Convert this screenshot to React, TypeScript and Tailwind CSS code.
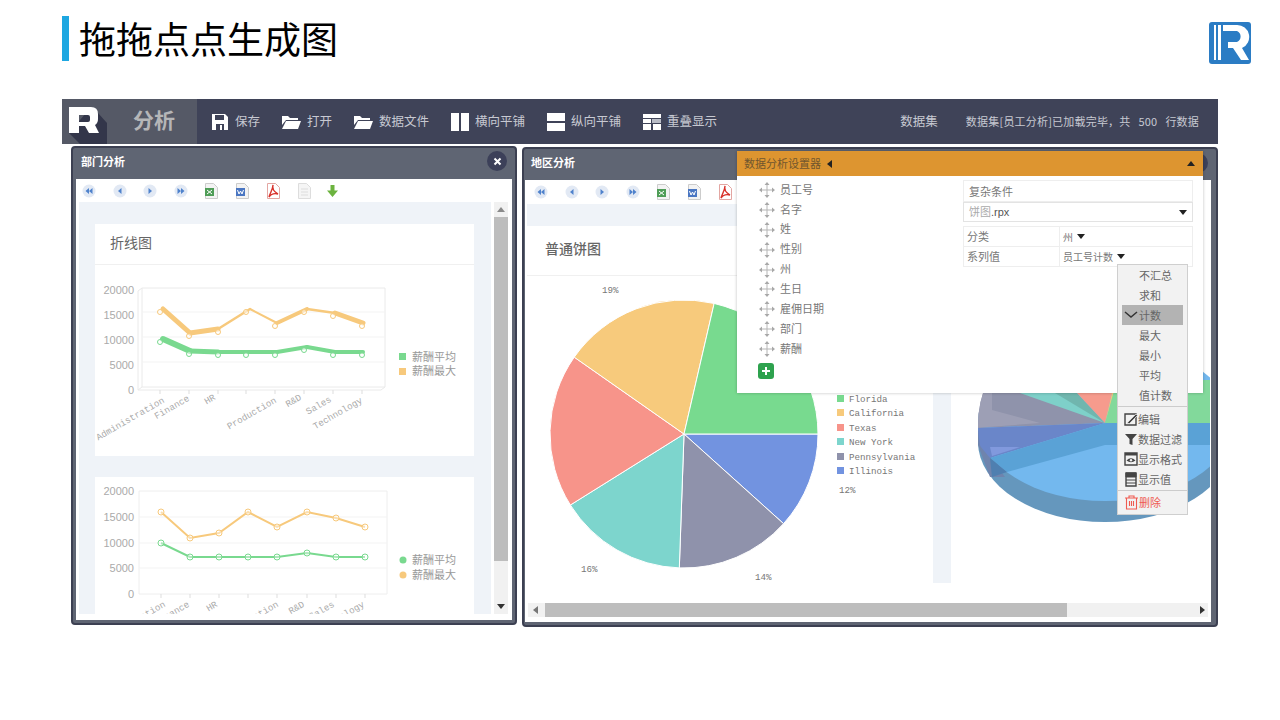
import React from 'react';

const cjk = "font-['Noto_Sans_CJK_SC','Liberation_Sans',sans-serif]";
const mono = "font-['Liberation_Mono','Noto_Sans_CJK_SC',monospace]";

const polar = (cx: number, cy: number, r: number, deg: number) => {
  const a = (deg * Math.PI) / 180;
  return [cx + r * Math.cos(a), cy + r * Math.sin(a)];
};

const slice = (cx: number, cy: number, r: number, from: number, to: number) => {
  const [x1, y1] = polar(cx, cy, r, from);
  const [x2, y2] = polar(cx, cy, r, to);
  return `M${cx} ${cy}L${x1} ${y1}A${r} ${r} 0 ${to - from > 180 ? 1 : 0} 1 ${x2} ${y2}Z`;
};

const SaveIcon = () => (
  <svg width="18" height="18" viewBox="0 0 18 18">
    <path d="M1 1h13l3 3v13H1z" fill="#fff" />
    <path d="M4 2h9v5H4z" fill="#3f4358" />
    <path d="M5 11h8v6H5z" fill="#3f4358" />
    <path d="M9 12h2v5H9z" fill="#fff" />
  </svg>
);

const FolderIcon = () => (
  <svg width="19" height="18" viewBox="0 0 19 18">
    <path d="M0 3h6l2 2h8v2H4L0 12z" fill="#fff" />
    <path d="M4 8h15l-3 8H0z" fill="#fff" />
  </svg>
);

const ColumnsIcon = () => (
  <svg width="18" height="18" viewBox="0 0 18 18">
    <path d="M0 0h8v18H0zM10 0h8v18h-8z" fill="#fff" />
  </svg>
);

const RowsIcon = () => (
  <svg width="18" height="18" viewBox="0 0 18 18">
    <path d="M0 0h18v8H0zM0 10h18v8H0z" fill="#fff" />
  </svg>
);

const CascadeIcon = () => (
  <svg width="18" height="18" viewBox="0 0 18 18">
    <path d="M0 1h18v4H0zM0 6h8v4H0zM0 11h8v6H0zM10 11h8v6h-8z" fill="#fff" />
    <path d="M9 6h9v4H9z" fill="#b9bcc6" />
  </svg>
);

const NavIcon = ({ kind }: { kind: 'first' | 'prev' | 'next' | 'last' }) => (
  <svg width="14" height="14" viewBox="0 0 14 14">
    <circle cx="7" cy="7" r="6.5" fill="#e2e9f4" />
    {kind === 'first' && <path d="M7 4v6L3.5 7zM10.5 4v6L7 7z" fill="#4f82cc" />}
    {kind === 'prev' && <path d="M8.5 4v6L5 7z" fill="#4f82cc" />}
    {kind === 'next' && <path d="M5.5 4v6L9 7z" fill="#4f82cc" />}
    {kind === 'last' && <path d="M3.5 4v6L7 7zM7 4v6l3.5-3z" fill="#4f82cc" />}
  </svg>
);

const FileIcon = ({ color, mark }: { color: string; mark: string }) => (
  <svg width="15" height="16" viewBox="0 0 15 16">
    <path d="M1.5.5h8l4 4v11h-12z" fill="#f3f3f3" stroke="#ccc" />
    <rect x="1" y="5" width="9" height="8" fill={color} />
    <path d={mark} stroke="#fff" strokeWidth="1" fill="none" />
  </svg>
);

const PdfIcon = () => (
  <svg width="15" height="16" viewBox="0 0 15 16">
    <path d="M1.5.5h8l4 4v11h-12z" fill="#fff" stroke="#e3a6a2" />
    <path d="M7 2c-1 3 0 6 5 9-4-1-7 0-9 3 1-4 4-8 4-12z" fill="none" stroke="#d8312a" strokeWidth="1.4" />
  </svg>
);

const BlankIcon = () => (
  <svg width="13" height="16" viewBox="0 0 13 16">
    <path d="M.5.5h8l4 4v11H.5z" fill="#f5f5f5" stroke="#ddd" />
    <path d="M3 6h7M3 9h7M3 12h7" stroke="#ddd" />
  </svg>
);

const DownIcon = () => (
  <svg width="11" height="12" viewBox="0 0 11 12">
    <path d="M3.5 0h4v5.5H11L5.5 12 0 5.5h3.5z" fill="#6cb33f" />
  </svg>
);

const MoveIcon = () => (
  <svg width="16" height="16" viewBox="0 0 16 16" className="shrink-0">
    <path d="M8 2v12M2 8h12" stroke="#b5b5b5" strokeWidth="1" />
    <path d="M8 0l2.5 3h-5zM8 16l2.5-3h-5zM0 8l3-2.5v5zM16 8l-3-2.5v5z" fill="#a8a8a8" />
  </svg>
);

const Caret = ({ className = '' }: { className?: string }) => (
  <span className={`inline-block h-0 w-0 border-x-[4px] border-t-[5px] border-x-transparent border-t-[#222] ${className}`} />
);

const ReportToolbar = ({ full }: { full: boolean }) => (
  <div className="flex items-center">
    <div className="flex w-[31px] justify-center"><NavIcon kind="first" /></div>
    <div className="flex w-[31px] justify-center"><NavIcon kind="prev" /></div>
    <div className="flex w-[30px] justify-center"><NavIcon kind="next" /></div>
    <div className="flex w-[31px] justify-center"><NavIcon kind="last" /></div>
    <div className="flex w-[31px] justify-center"><FileIcon color="#4f9d57" mark="M3 7l5 4M8 7l-5 4" /></div>
    <div className="flex w-[31px] justify-center"><FileIcon color="#4a76c2" mark="M2.5 7l1.5 4 1.5-3 1.5 3 1.5-4" /></div>
    <div className="flex w-[31px] justify-center"><PdfIcon /></div>
    {full && <div className="flex w-[30px] justify-center"><BlankIcon /></div>}
    {full && <div className="flex w-[27px] justify-center"><DownIcon /></div>}
  </div>
);

const CloseButton = () => (
  <span className="flex h-5 w-5 items-center justify-center rounded-full bg-[#3c4059]">
    <svg width="9" height="9" viewBox="0 0 9 9">
      <path d="M1.5 1.5l6 6M7.5 1.5l-6 6" stroke="#fff" strokeWidth="2" />
    </svg>
  </span>
);

const xLabels: [string, number, number][] = [
  ['Administration', 165, 402],
  ['Finance', 190, 400],
  ['HR', 216, 399],
  ['Production', 277, 402],
  ['R&D', 302, 399],
  ['Sales', 332, 401],
  ['Technology', 363, 402],
];

const LineChartA = () => {
  const xs = [163, 190, 218, 250, 277, 307, 335, 363];
  const orange = [309, 333, 329, 309, 323, 309, 313, 323];
  const orangeW = [5, 5, 2.5, 2, 4, 2.5, 5, 5];
  const green = [339, 351, 352, 352, 352, 347, 352, 352];
  const greenW = [6, 5, 4, 4, 4, 4, 4, 4];
  const tx = [160, 189, 218, 246, 275, 304, 333, 362];
  return (
    <svg width="379" height="191" viewBox="95 265 379 191" className="block">
      <path d="M142 288H385V387H142zM142 288l-4 3V390l4-3M138 390H381l4-3" fill="none" stroke="#eaeaea" />
      <path d="M142 312H385M142 337H385M142 362H385" stroke="#f3f3f3" />
      {[['20000', 294], ['15000', 319], ['10000', 344], ['5000', 369], ['0', 394]].map(([t, y]) => (
        <text key={t} x="134" y={y} textAnchor="end" className="fill-[#aaa] font-['Liberation_Sans',sans-serif] text-[11px]">{t}</text>
      ))}
      {tx.map((x) => <path key={x} d={`M${x} 390v4`} stroke="#ddd" />)}
      {xs.slice(1).map((x, i) => (
        <line key={x} x1={xs[i]} y1={orange[i]} x2={x} y2={orange[i + 1]} stroke="#f7c97c" strokeWidth={orangeW[i]} strokeLinecap="round" />
      ))}
      {xs.slice(1).map((x, i) => (
        <line key={x} x1={xs[i]} y1={green[i]} x2={x} y2={green[i + 1]} stroke="#79d98f" strokeWidth={greenW[i]} strokeLinecap="round" />
      ))}
      {tx.map((x, i) => (
        <circle key={x} cx={x} cy={orange[i] + 3} r="2.5" fill="#fff" fillOpacity="0.5" stroke="#f7c97c" />
      ))}
      {tx.map((x, i) => (
        <circle key={x} cx={x} cy={green[i] + 3} r="2.5" fill="#fff" fillOpacity="0.5" stroke="#79d98f" />
      ))}
      {xLabels.map(([t, x, y]) => (
        <text key={t} textAnchor="end" transform={`translate(${x} ${y}) rotate(-30)`} className={`fill-[#aaa] ${mono} text-[9.2px]`}>{t}</text>
      ))}
      <rect x="399" y="353" width="7" height="7" fill="#79d98f" />
      <rect x="399" y="368" width="7" height="7" fill="#f7c97c" />
      <text x="412" y="361" className={`fill-[#999] ${cjk} text-[11px]`}>薪酬平均</text>
      <text x="412" y="375" className={`fill-[#999] ${cjk} text-[11px]`}>薪酬最大</text>
    </svg>
  );
};

const LineChartB = () => {
  const xs = [161, 190, 219, 248, 277, 307, 336, 365];
  const orange = [512, 538, 533, 512, 527, 512, 518, 527];
  const green = [543, 557, 557, 557, 557, 553, 557, 557];
  const toPts = (ys: number[]) => xs.map((x, i) => `${x},${ys[i]}`).join(' ');
  return (
    <svg width="379" height="137" viewBox="95 477 379 137" className="block">
      <path d="M139 491H387V594H139z" fill="none" stroke="#eee" />
      <path d="M139 517H387M139 543H387M139 568H387" stroke="#f3f3f3" />
      {[['20000', 495], ['15000', 521], ['10000', 547], ['5000', 572], ['0', 598]].map(([t, y]) => (
        <text key={t} x="134" y={y} textAnchor="end" className="fill-[#aaa] font-['Liberation_Sans',sans-serif] text-[11px]">{t}</text>
      ))}
      {xs.map((x) => <path key={x} d={`M${x} 594v4`} stroke="#ddd" />)}
      <polyline points={toPts(orange)} fill="none" stroke="#f7c97c" strokeWidth="2" />
      <polyline points={toPts(green)} fill="none" stroke="#79d98f" strokeWidth="2" />
      {xs.map((x, i) => <circle key={x} cx={x} cy={orange[i]} r="3" fill="#fff" fillOpacity="0.4" stroke="#f7c97c" />)}
      {xs.map((x, i) => <circle key={x} cx={x} cy={green[i]} r="3" fill="#fff" fillOpacity="0.4" stroke="#79d98f" />)}
      {[['Administration', 166], ['Finance', 190], ['HR', 218], ['Production', 279], ['R&D', 305], ['Sales', 335], ['Technology', 365]].map(([t, x]) => (
        <text key={t} textAnchor="end" transform={`translate(${x} 606) rotate(-30)`} className={`fill-[#aaa] ${mono} text-[9.2px]`}>{t}</text>
      ))}
      <circle cx="403" cy="560" r="3.5" fill="#79d98f" />
      <circle cx="403" cy="575" r="3.5" fill="#f7c97c" />
      <text x="412" y="564" className={`fill-[#999] ${cjk} text-[11px]`}>薪酬平均</text>
      <text x="412" y="579" className={`fill-[#999] ${cjk} text-[11px]`}>薪酬最大</text>
    </svg>
  );
};

const pieSlices: [number, number, string][] = [
  [0, 42, '#7293e0'],
  [42, 92, '#8f92ab'],
  [92, 148, '#7dd5cd'],
  [148, 215, '#f7948a'],
  [215, 283, '#f7ca7c'],
  [283, 360, '#78da8f'],
];

const legendRows: [string, string, number][] = [
  ['Florida', '#78da8f', 398],
  ['California', '#f7ca7c', 412],
  ['Texas', '#f7948a', 427],
  ['New York', '#7dd5cd', 441],
  ['Pennsylvania', '#8f92ab', 456],
  ['Illinois', '#7293e0', 470],
];

const PieChart = () => (
  <svg width="406" height="307" viewBox="527 276 406 307" className="block">
    {pieSlices.map(([a, b, c]) => (
      <path key={c} d={slice(684, 434, 134, a, b)} fill={c} stroke="#fff" strokeWidth="1" />
    ))}
    {legendRows.map(([t, c, y]) => (
      <g key={t}>
        <rect x="837" y={y - 3} width="7" height="7" fill={c} />
        <text x="849" y={y + 4} className={`fill-[#777] ${mono} text-[9.2px]`}>{t}</text>
      </g>
    ))}
    {[['19%', 602, 293], ['16%', 581, 572], ['14%', 755, 580], ['12%', 839, 493]].map(([t, x, y]) => (
      <text key={t} x={x} y={y} className={`fill-[#777] ${mono} text-[9.2px]`}>{t}</text>
    ))}
  </svg>
);

const Pie3D = () => (
  <svg width="259" height="399" viewBox="951 204 259 399" className="block">
    <defs>
      <clipPath id="pie-top">
        <ellipse cx="1105" cy="425" rx="127" ry="115" />
      </clipPath>
    </defs>
    <ellipse cx="1105" cy="442" rx="127" ry="80" fill="#6597bd" />
    <path d="M978 425v20l12 32 15 0-15-20z" fill="#6f84ad" />
    <ellipse cx="1105" cy="422" rx="127" ry="79" fill="#73b8ee" />
    <g clipPath="url(#pie-top)">
      <path d="M1105 423L975 428V380H1040z" fill="#8f93ab" />
      <path d="M975 380H992V410L1040 423 975 428z" fill="#9d9fb5" />
      <path d="M1105 423L1020 393H1062z" fill="#7ed0c9" />
      <path d="M1105 423L1055 393H1077z" fill="#70b6ae" />
      <path d="M1105 423L1077 393H1112z" fill="#f69b8d" />
      <path d="M1105 423L1112 393H1117z" fill="#f3c77c" />
      <path d="M1105 423L1117 380H1240V423z" fill="#82d99b" />
      <path d="M1105 423L975 428V440L990 458z" fill="#6a86c9" />
    </g>
    <path d="M990 447H1020L992 456z" fill="#8199dd" />
    <path d="M1105 423H1210V445H1105L1007 472 990 458z" fill="#5aa2d6" />
    <path d="M990 458l17 14-15 5z" fill="#4f7fb0" />
  </svg>
);

const fields = ['员工号', '名字', '姓', '性别', '州', '生日', '雇佣日期', '部门', '薪酬'];

const menuTop = ['不汇总', '求和', '计数', '最大', '最小', '平均', '值计数'];

const EditIcon = () => (
  <svg width="14" height="14" viewBox="0 0 14 14">
    <path d="M1 2h11v11H1z" fill="none" stroke="#444" strokeWidth="1.4" />
    <path d="M4 10l8-8 1.5 1.5-8 8H3z" fill="#444" stroke="#f2f2f2" strokeWidth="0.7" />
  </svg>
);
const FilterIcon = () => (
  <svg width="14" height="14" viewBox="0 0 14 14">
    <path d="M1 2h12L8.5 7v6l-3-1V7z" fill="#444" />
  </svg>
);
const EyeIcon = () => (
  <svg width="14" height="14" viewBox="0 0 14 14">
    <path d="M1 1h12v12H1z" fill="none" stroke="#444" strokeWidth="1.4" />
    <path d="M1 1h12v2.5H1z" fill="#444" />
    <path d="M2.5 8.5Q7 4 11.5 8.5 7 12 2.5 8.5z" fill="#444" />
    <circle cx="7" cy="8.3" r="1.2" fill="#f2f2f2" />
  </svg>
);
const ValueIcon = () => (
  <svg width="14" height="15" viewBox="0 0 14 15">
    <path d="M2 1h10v13H2z" fill="none" stroke="#444" strokeWidth="1.4" />
    <path d="M2 1h10v4H2zM2 8h10M2 11h10" fill="#444" stroke="#444" />
  </svg>
);
const TrashIcon = () => (
  <svg width="15" height="15" viewBox="0 0 15 15">
    <path d="M2.5 3h10v11h-10zM1 3h13M5 3V1h5v2M5.5 6v5M7.5 6v5M9.5 6v5" fill="none" stroke="#ef5b50" strokeWidth="1.1" />
  </svg>
);

const menuBottom: [React.ReactNode, string][] = [
  [<EditIcon />, '编辑'],
  [<FilterIcon />, '数据过滤'],
  [<EyeIcon />, '显示格式'],
  [<ValueIcon />, '显示值'],
];

const AggregateMenu = () => (
  <div className={`absolute left-[380px] top-[113px] w-[71px] border border-[#cfcfcf] bg-[#f2f2f2] text-[11px] text-[#666] ${cjk}`}>
    <div className="flex flex-col">
      {menuTop.map((m) => (
        <div key={m} className={`mx-[4px] flex h-[20px] items-center ${m === '计数' ? 'bg-[#b3b3b3]' : ''}`}>
          {m === '计数' ? (
            <svg width="16" height="8" viewBox="0 0 16 8" className="ml-[1px]">
              <path d="M2 1l6 5 6-5" fill="none" stroke="#333" strokeWidth="1.5" />
            </svg>
          ) : (
            <span className="w-[17px]" />
          )}
          <span>{m}</span>
        </div>
      ))}
    </div>
    <div className="mt-[1px] flex flex-col border-t border-[#ccc] pt-[2px]">
      {menuBottom.map(([icon, t]) => (
        <div key={t} className="flex h-[20px] items-center pl-[6px]">
          {icon}
          <span>{t}</span>
        </div>
      ))}
    </div>
    <div className="mt-[1px] flex h-[24px] items-center border-t border-[#ccc] pl-[6px] text-[#ef5b50]">
      <TrashIcon />
      <span>删除</span>
    </div>
  </div>
);

const SettingsPanel = () => (
  <div className="absolute left-[213px] top-[2px] h-[242px] w-[466px] bg-white shadow-[0_0_3px_rgba(0,0,0,0.25)]">
    <div className="flex h-[25px] items-center justify-between bg-[#dd9530] pl-[7px] pr-[8px]">
      <div className={`flex items-center gap-[6px] text-[11px] text-[#70562e] ${cjk}`}>
        数据分析设置器
        <span className="h-0 w-0 border-y-[4px] border-r-[5px] border-y-transparent border-r-[#222]" />
      </div>
      <span className="h-0 w-0 border-x-[4px] border-b-[5px] border-x-transparent border-b-[#222]" />
    </div>
    <div className="flex">
      <div className="w-[226px] pl-[22px] pt-[4px]">
        {fields.map((f) => (
          <div key={f} className={`flex h-[19.9px] items-center gap-[5px] text-[11px] text-[#777] ${cjk}`}>
            <MoveIcon />
            <span className="-mt-[2px]">{f}</span>
          </div>
        ))}
        <div className="-ml-[1px] mt-[4px] flex h-[16px] w-[16px] items-center justify-center rounded-[3px] bg-[#2ea24e]">
          <svg width="10" height="10" viewBox="0 0 10 10">
            <path d="M5 1v8M1 5h8" stroke="#fff" strokeWidth="2" />
          </svg>
        </div>
      </div>
      <div className={`w-[230px] pt-[4px] text-[11px] text-[#777] ${cjk}`}>
        <div className="flex h-[22px] items-center border border-[#eee] pl-[5px]">复杂条件</div>
        <div className="flex h-[20px] items-center justify-between border border-[#e3e3e3] pl-[5px] pr-[5px]">
          <span>
            <span className="text-[#aaa]">饼图</span>
            <span className="font-['Liberation_Sans',sans-serif] text-[#555]">.rpx</span>
          </span>
          <Caret />
        </div>
        <div className="mt-[4px] border border-[#eee]">
          <div className="flex h-[20px] border-b border-[#eee]">
            <div className="flex w-[96px] items-center border-r border-[#eee] pl-[3px]">分类</div>
            <div className="flex items-center gap-[4px] pl-[3px] text-[10px]">州 <Caret /></div>
          </div>
          <div className="flex h-[19px]">
            <div className="flex w-[96px] items-center border-r border-[#eee] pl-[3px]">系列值</div>
            <div className="flex items-center gap-[4px] pl-[3px] text-[10px]">员工号计数 <Caret /></div>
          </div>
        </div>
      </div>
    </div>
    <AggregateMenu />
  </div>
);

const TriUp = () => <span className="h-0 w-0 border-x-[4px] border-b-[5px] border-x-transparent border-b-[#8a8a8a]" />;
const TriDown = () => <span className="h-0 w-0 border-x-[4px] border-t-[5px] border-x-transparent border-t-[#333]" />;

const LogoR = () => (
  <svg width="42" height="42" viewBox="0 0 42 42">
    <rect width="42" height="42" rx="3" fill="#2b7cc4" />
    <path d="M5 3h2v35H5zM9 3h3v35H9z" fill="#fff" />
    <path d="M14 3h14a12 12 0 0 1 5 23l7 12h-8l-8-12h-5v-6h9a6 6 0 0 0 0-11H14z" fill="#fff" />
  </svg>
);

const BrandR = () => (
  <svg width="58" height="45" viewBox="0 0 58 45">
    <path d="M7 34l11 11h27V24l-9-10-7-6z" fill="#33364a" />
    <path d="M7 8h22q7 0 7 7v5q0 4-3 6l4 8H27l-4-7h-6v7H7zM17 16v7h9q2 0 2-2v-3q0-2-2-2z" fill="#fff" fillRule="evenodd" />
  </svg>
);

const tools: [React.ReactNode, string][] = [
  [<SaveIcon />, '保存'],
  [<FolderIcon />, '打开'],
  [<FolderIcon />, '数据文件'],
  [<ColumnsIcon />, '横向平铺'],
  [<RowsIcon />, '纵向平铺'],
  [<CascadeIcon />, '重叠显示'],
];

const App: React.FC = () => {
  return (
    <div className={`flex h-[720px] w-[1280px] flex-col overflow-hidden bg-white ${cjk}`}>
      {/* slide head */}
      <div className="flex h-[99px] shrink-0 justify-between pl-[62px] pr-[29px]">
        <div className="mt-[16px] flex h-[45px] items-center gap-[10px]">
          <div className="h-[45px] w-[7px] bg-[#1ea7e1]" />
          <h1 className="text-[37px] font-normal leading-[45px] text-black">拖拖点点生成图</h1>
        </div>
        <div className="mt-[22px]"><LogoR /></div>
      </div>

      <div className="ml-[62px] w-[1156px] self-start">
        {/* app toolbar */}
        <div className="flex h-[45px] items-center bg-[#3f4358] pr-[19px] text-[12.5px] text-[#c7c9d2]">
          <div className="flex h-full w-[135px] items-center bg-[#555966]">
            <BrandR />
            <span className="-mt-[4px] ml-[13px] text-[21px] font-bold leading-none text-[#b5b6b8]">分析</span>
          </div>
          <div className="ml-[14px] flex items-center gap-[22px]">
            {tools.map(([icon, t]) => (
              <div key={t} className="flex items-center gap-[6px]">
                {icon}
                <span>{t}</span>
              </div>
            ))}
          </div>
          <span className="ml-auto">数据集</span>
          <span className="ml-[28px] text-[11px] tracking-[0.2px]">数据集[员工分析]已加载完毕，共&nbsp;&nbsp;&nbsp;500&nbsp;&nbsp;&nbsp;行数据</span>
        </div>

        <div className="flex items-start pl-[9px] pt-[2px]">
          {/* left window */}
          <div className="flex h-[479px] w-[446px] flex-col rounded-[4px] border-2 border-[#3c4052] bg-[#5f6573]">
            <div className="flex h-[31px] shrink-0 items-center justify-between pb-[5px] pl-[8px] pr-[8px] text-[11px] font-bold text-white">
              部门分析
              <CloseButton />
            </div>
            <div className="mx-[3px] flex h-[441px] flex-col bg-white">
              <div className="-ml-[3px] flex h-[23px] shrink-0 items-center"><ReportToolbar full /></div>
              <div className="flex h-[412px] pl-[3px]">
                <div className="w-[412px] overflow-hidden bg-[#eff3f8] pl-[16px] pt-[22px]">
                  <div className="w-[379px] bg-white">
                    <div className="flex h-[41px] items-center border-b border-[#f0f0f0] pb-[4px] pl-[15px] text-[14px] text-[#666]">折线图</div>
                    <LineChartA />
                  </div>
                  <div className="mt-[21px] w-[379px] bg-white">
                    <LineChartB />
                  </div>
                </div>
                <div className="ml-[3px] flex w-[14px] flex-col items-center bg-[#f1f1f1]">
                  <div className="flex h-[15px] items-center"><TriUp /></div>
                  <div className="h-[344px] w-full bg-[#bdbdbd]" />
                  <div className="flex flex-1 items-end pb-[5px]"><TriDown /></div>
                </div>
              </div>
            </div>
          </div>

          {/* right window */}
          <div className="relative ml-[5px] mt-[1px] flex h-[480px] w-[696px] flex-col rounded-[4px] border-2 border-[#3c4052] bg-[#5f6573]">
            <div className="flex h-[31px] shrink-0 items-center justify-between pb-[4px] pl-[7px] pr-[8px] text-[11px] font-bold text-white">
              地区分析
              <CloseButton />
            </div>
            <div className="mx-[1px] flex h-[442px] w-[686px] flex-col bg-white">
              <div className="flex h-[24px] shrink-0 items-center"><ReportToolbar full={false} /></div>
              <div className="flex h-[399px] pl-[2px]">
                <div className="h-[379px] w-[424px] bg-[#eff3f8] pr-[18px] pt-[22px]">
                  <div className="w-[406px] bg-white">
                    <div className="flex h-[50px] items-center border-b border-[#f0f0f0] pb-[4px] pl-[18px] text-[14px] font-medium text-[#666]">普通饼图</div>
                    <PieChart />
                  </div>
                </div>
                <Pie3D />
              </div>
              <div className="ml-[3px] flex h-[14px] w-[680px] items-center bg-[#f1f1f1]">
                <span className="ml-[5px] h-0 w-0 border-y-[4px] border-r-[5px] border-y-transparent border-r-[#777]" />
                <div className="ml-[7px] h-full w-[522px] bg-[#bdbdbd]" />
                <span className="ml-auto mr-[3px] h-0 w-0 border-y-[4px] border-l-[5px] border-y-transparent border-l-[#333]" />
              </div>
            </div>
            <SettingsPanel />
          </div>
        </div>
      </div>
    </div>
  );
};

export default App;
